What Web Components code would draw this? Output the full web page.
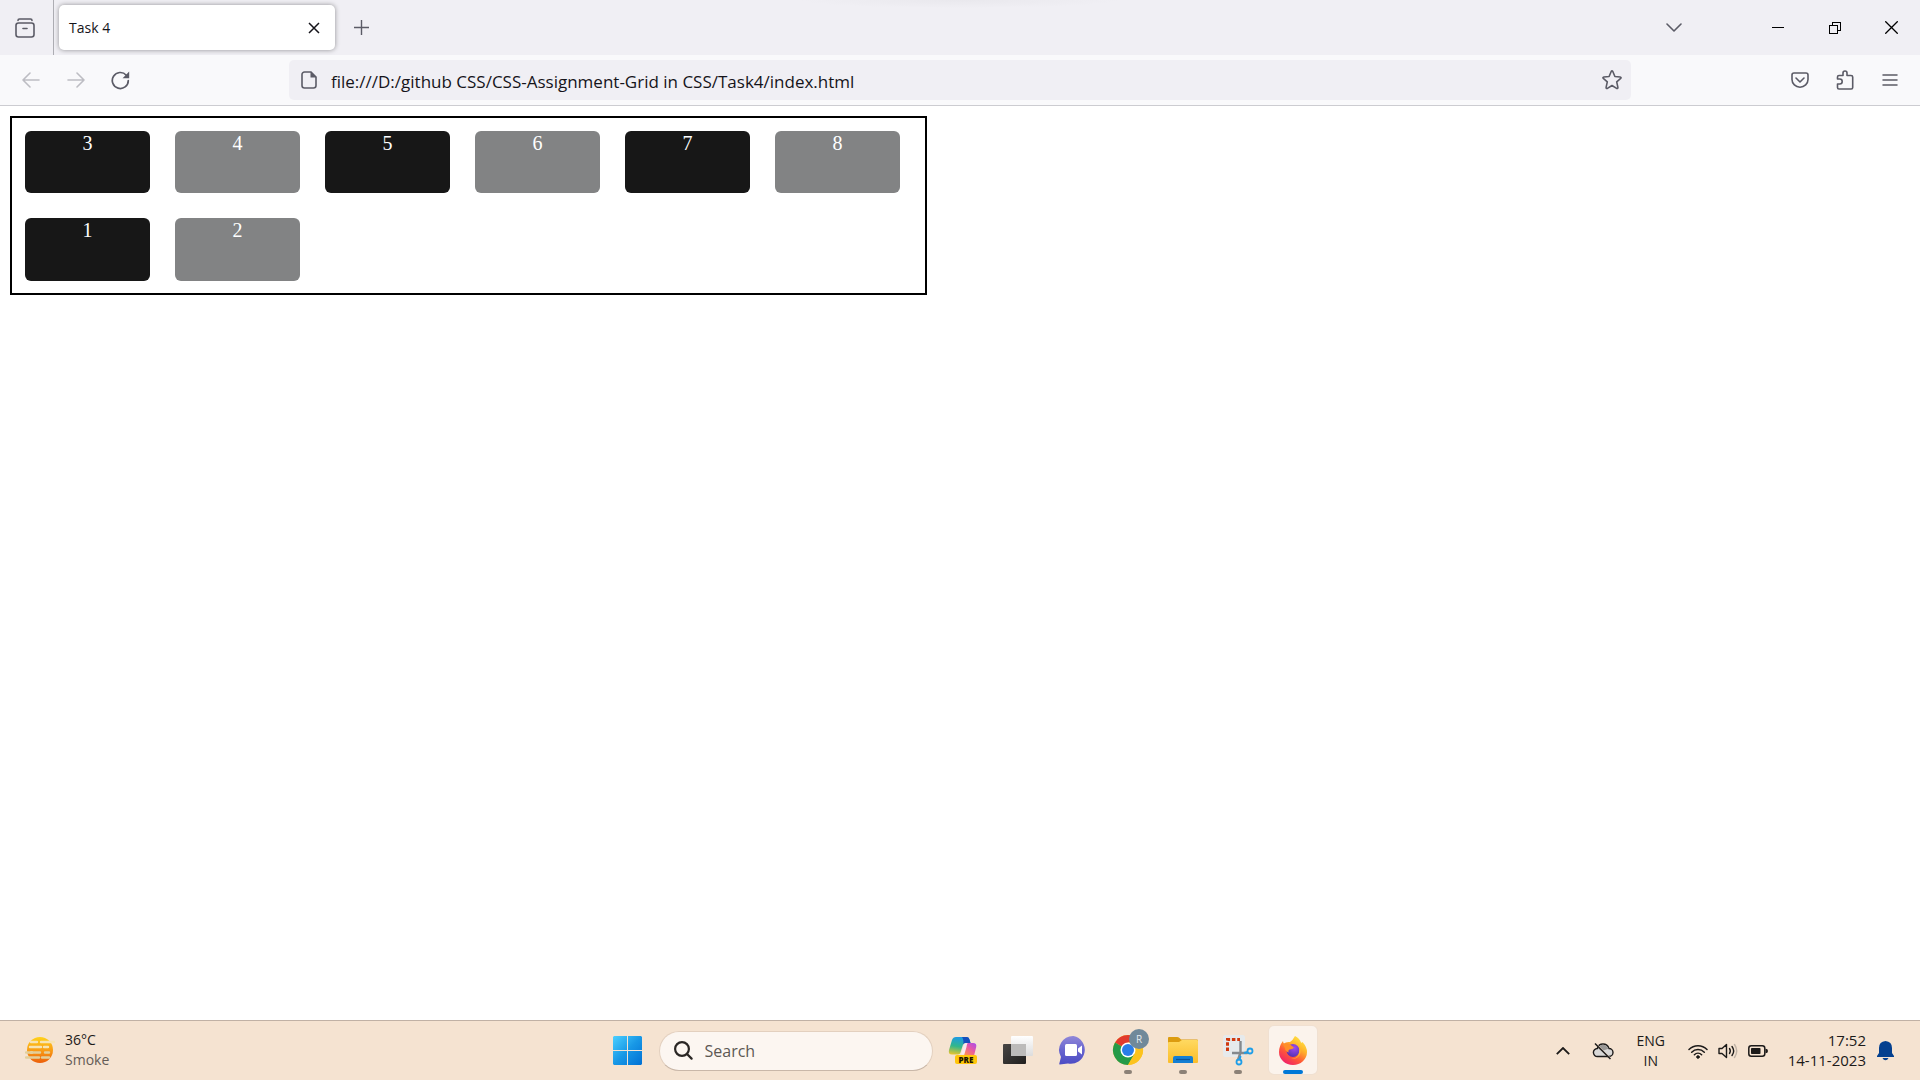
<!DOCTYPE html>
<html lang="en">
<head>
<meta charset="utf-8">
<title>Task 4</title>
<style>
  html, body { height: 100%; }
  body {
    margin: 0;
    display: flex;
    flex-direction: column;
    overflow: hidden;
    background: #fff;
    font-family: "Open Sans", "Noto Sans", sans-serif;
  }
  page-view { flex: 1; }
</style>
</head>
<body>
<tab-strip></tab-strip>
<nav-bar></nav-bar>
<page-view>
  <number-grid>
    <grid-cell tone="dark">3</grid-cell>
    <grid-cell tone="light">4</grid-cell>
    <grid-cell tone="dark">5</grid-cell>
    <grid-cell tone="light">6</grid-cell>
    <grid-cell tone="dark">7</grid-cell>
    <grid-cell tone="light">8</grid-cell>
    <grid-cell tone="dark">1</grid-cell>
    <grid-cell tone="light">2</grid-cell>
  </number-grid>
</page-view>
<task-bar></task-bar>

<script>
function define(name, html) {
  const template = document.createElement('template');
  template.innerHTML = html;
  customElements.define(name, class extends HTMLElement {
    constructor() {
      super();
      this.attachShadow({ mode: 'open' }).append(template.content.cloneNode(true));
    }
    connectedCallback() {
      const button = this.shadowRoot.querySelector('button[data-labelled]');
      if (button && this.hasAttribute('label')) button.setAttribute('aria-label', this.getAttribute('label'));
    }
  });
}

/* Square button that holds one slotted icon */
define('icon-button', `
<style>
  :host { display: block; width: 45px; height: 45px; color: #5b5b66; }
  :host([dim]) { color: #bdbdc3; }
  :host([window]) { width: 57px; color: #000; }
  button { all: unset; display: flex; width: 100%; height: 100%; align-items: center; justify-content: center; }
  ::slotted(svg) { display: block; }
</style>
<button data-labelled><slot></slot></button>`);

define('browser-tab', `
<style>
  :host {
    display: flex; align-items: center; justify-content: space-between; box-sizing: border-box;
    width: 276px; height: 45px; padding: 0 4px 0 10px; border-radius: 5px;
    background: #fff; box-shadow: 0 0 5px rgba(0,0,0,.4); color: #15141a;
    font-size: 14px; line-height: 20px;
  }
  icon-button { width: 34px; height: 34px; color: #15141a; }
</style>
<slot></slot>
<icon-button label="Close tab"><svg width="12" height="12" viewBox="0 0 12 12" fill="none" stroke="currentColor" stroke-width="1.5"><path d="M1 1l10 10M11 1L1 11"/></svg></icon-button>`);

define('tab-strip', `
<style>
  :host {
    display: flex; align-items: center; height: 55px;
    background: radial-gradient(ellipse 160px 8px at 50% 0, #e9e8ed, #f0eff4) #f0eff4;
  }
  .view { display: flex; align-items: center; width: 54px; height: 55px; border-right: 1px solid #adadb3; padding-left: 2px; box-sizing: border-box; }
  browser-tab { margin: 0 4px 0 5px; }
  .fill { flex: 1; }
  .list { margin-right: 53px; }
</style>
<div class="view"><icon-button label="Firefox View"><svg width="20" height="20" viewBox="0 0 20 20" fill="none" stroke="currentColor" stroke-width="1.6" stroke-linecap="round"><path d="M3 2.500Q3 1 4.500 1h11Q17 1 17 2.500"/><rect x="1" y="5" width="18" height="14" rx="2.500"/><path d="M8 10.500h4"/></svg></icon-button></div>
<browser-tab>Task 4</browser-tab>
<icon-button label="New tab"><svg width="15" height="15" viewBox="0 0 15 15" fill="none" stroke="currentColor" stroke-width="1.4"><path d="M7.500 0v15M0 7.500h15"/></svg></icon-button>
<div class="fill"></div>
<icon-button class="list" label="List all tabs"><svg width="16" height="10" viewBox="0 0 16 10" fill="none" stroke="currentColor" stroke-width="1.600" stroke-linecap="round" stroke-linejoin="round"><path d="M1 1l7 7 7-7"/></svg></icon-button>
<icon-button window label="Minimise"><svg width="12" height="12" viewBox="0 0 12 12" shape-rendering="crispEdges"><path d="M0 5h12v1H0z"/></svg></icon-button>
<icon-button window label="Restore"><svg width="12" height="12" viewBox="0 0 12 12" fill="none" stroke="currentColor" shape-rendering="crispEdges"><path d="M.5 3.500h8v8h-8zM3.500 3V.5h8v8H9"/></svg></icon-button>
<icon-button window label="Close"><svg width="13" height="13" viewBox="0 0 13 13" fill="none" stroke="currentColor" stroke-width="1.300"><path d="M.3.3l12.400 12.400M12.700.3L.3 12.700"/></svg></icon-button>`);

define('address-field', `
<style>
  :host { display: flex; align-items: center; box-sizing: border-box; height: 40px; padding-left: 12px; border-radius: 5px; background: #f0eff4; color: #5b5b66; }
  input { all: unset; flex: 1; min-width: 0; height: 24px; padding-top: 3px; margin-left: 14px; color: #15141a; font-size: 17px; line-height: 24px; }
  icon-button { width: 38px; height: 38px; }
</style>
<svg width="16" height="18" viewBox="0 0 16 18"><path d="M3.500 1H10l5 5v8.500a2.500 2.500 0 0 1-2.500 2.500h-9A2.500 2.500 0 0 1 1 14.500v-11A2.500 2.500 0 0 1 3.500 1z" fill="none" stroke="currentColor" stroke-width="1.600"/><path d="M9.500.8v5.700h5.700z" fill="currentColor"/></svg>
<input type="text" aria-label="Address" spellcheck="false" value="file:///D:/github CSS/CSS-Assignment-Grid in CSS/Task4/index.html">
<icon-button label="Bookmark this page"><svg width="20" height="20" viewBox="0 0 20 20" fill="none" stroke="currentColor" stroke-width="1.600" stroke-linejoin="round"><path d="M9.200 1.500q.8-1.200 1.600 0l2.100 5 5.300.5q1.400.3.500 1.400l-4 3.500 1.200 5.500q0 1.500-1.300 1L10 15.500l-4.600 2.900q-1.300.5-1.300-1l1.200-5.500-4-3.500q-.9-1.100.5-1.400l5.300-.5z"/></svg></icon-button>`);

define('nav-bar', `
<style>
  :host { display: flex; align-items: center; box-sizing: border-box; height: 51px; padding: 0 8px; background: #f9f9fb; border-bottom: 1px solid #ccccd1; }
  .gap { flex: 0 1 146px; }
  address-field { flex: 1; }
</style>
<icon-button dim label="Back"><svg width="18" height="16" viewBox="0 0 18 16" fill="none" stroke="currentColor" stroke-width="1.600" stroke-linecap="round" stroke-linejoin="round"><path d="M17 8H1M8 1L1 8l7 7"/></svg></icon-button>
<icon-button dim label="Forward"><svg width="18" height="16" viewBox="0 0 18 16" fill="none" stroke="currentColor" stroke-width="1.600" stroke-linecap="round" stroke-linejoin="round"><path d="M1 8h16M10 1l7 7-7 7"/></svg></icon-button>
<icon-button label="Reload"><svg width="19" height="19" viewBox="0 0 19 19"><path d="M15.300 4.200A8 8 0 1 0 17.300 9.500" fill="none" stroke="currentColor" stroke-width="1.700" stroke-linecap="round"/><path d="M18.200.6v6.600h-6.600z" fill="currentColor"/></svg></icon-button>
<div class="gap"></div>
<address-field></address-field>
<div class="gap"></div>
<icon-button label="Save to Pocket"><svg width="18" height="16" viewBox="0 0 18 16" fill="none" stroke="currentColor" stroke-width="1.600" stroke-linecap="round" stroke-linejoin="round"><path d="M3 1h12q2 0 2 2v4.500a8 7.700 0 0 1-16 0V3q0-2 2-2z"/><path d="M5 6l4 4 4-4"/></svg></icon-button>
<icon-button label="Extensions"><svg width="18" height="20" viewBox="0 0 18 20" fill="none" stroke="currentColor" stroke-width="1.600" stroke-linejoin="round"><path d="M1.500 9V7q0-1.500 1.500-1.500h4V3a2 2 0 0 1 4 0v2.500h4q1.700 0 1.700 1.500v10.500q0 1.500-1.500 1.500H3q-1.500 0-1.500-1.500V14h2.300a2.400 2.500 0 0 0 0-5z"/></svg></icon-button>
<icon-button label="Open application menu"><svg width="16" height="12" viewBox="0 0 16 12" fill="none" stroke="currentColor" stroke-width="1.500" stroke-linecap="round"><path d="M1 1h14M1 6h14M1 11h14"/></svg></icon-button>`);

define('page-view', `
<style>:host { display: block; padding: 10px; background: #fff; }</style>
<slot></slot>`);

define('number-grid', `
<style>
  :host {
    display: inline-grid; grid-template-columns: repeat(6, 125px); grid-template-rows: 62px 63px; gap: 25px;
    padding: 13px 25px 12px 13px; border: 2px solid #000;
    font-family: "Liberation Serif", serif; font-size: 20px; line-height: 25px;
  }
</style>
<slot></slot>`);

define('grid-cell', `
<style>
  :host { display: block; border-radius: 6px; background: #171717; color: #fff; text-align: center; }
  :host([tone="light"]) { background: #828384; }
</style>
<slot></slot>`);

/* Pinned application; "running" and "active" add the marker under the icon */
define('task-app', `
<style>
  :host { display: block; width: 55px; height: 59px; }
  button { all: unset; display: flex; position: relative; box-sizing: border-box; width: 48px; height: 48px; margin: 5px auto 0; align-items: center; justify-content: center; border-radius: 5px; }
  :host([active]) button { background: #fbf3ec; box-shadow: 0 0 0 1px #f0e0d1; }
  :host([running]) button::after, :host([active]) button::after {
    content: ""; position: absolute; left: 20px; bottom: 0; width: 8px; height: 4px; border-radius: 2px; background: #8c8177;
  }
  :host([active]) button::after { left: 14px; width: 20px; background: #0078d7; }
  ::slotted(svg) { display: block; overflow: visible; }
</style>
<button data-labelled><slot></slot></button>`);

define('search-pill', `
<style>
  :host { display: flex; align-items: center; box-sizing: border-box; width: 274px; height: 40px; padding: 0 14px; border: 1px solid #e3d0bf; border-bottom-color: #c9b7a8; border-radius: 20px; background: #fcf6f1; }
  input { all: unset; flex: 1; min-width: 0; margin-left: 12px; height: 24px; font-size: 16px; line-height: 24px; color: #5d5854; }
  input::placeholder { color: #5d5854; opacity: 1; }
</style>
<svg width="19" height="19" viewBox="0 0 19 19" fill="none" stroke="#2a2624" stroke-width="2.200" stroke-linecap="round"><circle cx="8" cy="8" r="6.900"/><path d="M13 13l4.600 4.600"/></svg>
<input type="search" aria-label="Search" placeholder="Search">`);

define('task-bar', `
<style>
  :host {
    display: grid; grid-template-columns: 1fr auto 1fr; align-items: center; box-sizing: border-box; height: 60px;
    border-top: 1px solid #c0b1a5; background: #f5e3d1; color: #1c1a19; font-size: 14px; line-height: 20px;
  }
  button { all: unset; }
  .weather { display: flex; align-items: center; justify-self: start; gap: 10px; padding-left: 25px; padding-bottom: 2px; }
  .weather span { display: block; }
  .weather .sky { color: #645c56; }
  .apps { display: flex; align-items: center; }
  search-pill { margin: 0 3px 0 4px; }
  .tray { display: flex; align-items: center; justify-self: end; padding-right: 26px; }
  .tray svg { display: block; }
  .cloud { margin: 0 22px; }
  .lang { width: 30px; text-align: center; margin-right: 22px; }
  .status { display: flex; align-items: center; gap: 10px; margin-right: 20px; }
  .clock { text-align: right; margin-right: 11px; padding-bottom: 2px; font-size: 15px; }
</style>
<button class="weather">
  <svg width="30" height="28" viewBox="0 0 30 28">
    <defs><linearGradient id="sun" x1="0" y1="0" x2="0" y2="1"><stop offset="0" stop-color="#ffd21c"/><stop offset=".5" stop-color="#f99e16"/><stop offset="1" stop-color="#ec5f0b"/></linearGradient></defs>
    <circle cx="15" cy="14" r="13" fill="url(#sun)"/>
    <g stroke="#f6e4b4" stroke-width="2.400" stroke-linecap="round"><path d="M6 6h6M16 6h13M5 11h11M19 11h4M6 16.500h1" /><path d="M1 16.500h14M20 16.500h4M1 21.500h13M17 21.500h7" stroke="#e2cf9a"/></g>
  </svg>
  <span><span>36°C</span><span class="sky">Smoke</span></span>
</button>

<div class="apps">
  <task-app label="Start"><svg width="29" height="29" viewBox="0 0 29 29">
    <defs><linearGradient id="win" gradientUnits="userSpaceOnUse" x1="0" y1="0" x2="29" y2="29"><stop stop-color="#4cd0ff"/><stop offset=".5" stop-color="#1898e6"/><stop offset="1" stop-color="#0070d4"/></linearGradient></defs>
    <path fill="url(#win)" d="M1 0h13v14H0V1zM15 0h13l1 1v13H15zM0 15h14v14H1l-1-1zM15 15h14v13l-1 1H15z"/></svg></task-app>
  <search-pill></search-pill>
  <task-app label="Copilot"><svg width="30" height="29" viewBox="0 0 30 29">
    <defs>
      <linearGradient id="cpa" x1=".3" y1="0" x2=".1" y2="1"><stop stop-color="#1f9be2"/><stop offset=".5" stop-color="#31b78b"/><stop offset="1" stop-color="#f0c52a"/></linearGradient>
      <linearGradient id="cpb" x1="1" y1="0" x2=".2" y2="1"><stop stop-color="#a64cf0"/><stop offset=".5" stop-color="#e458a8"/><stop offset="1" stop-color="#ff8a55"/></linearGradient>
    </defs>
    <path d="M8 1h11q2 0 2.700 3l.8 3h-5q-2 0-2.600 2l-2.400 7.500Q12 18.500 10 18.500H4q-4 0-3-4.500L4 4q1-3 4-3z" fill="url(#cpa)"/>
    <path d="M14 1h5q2 0 2.700 3l.8 3h-5.300q-1.300 0-1.900 1.600Q16 3.500 14 1z" fill="#164fbc"/>
    <path d="M16.500 7.500h4l-3.500 11h-4z" fill="#f7e9ee"/>
    <path d="M20 7h5q4 0 3.200 4l-2 8h-10l2.300-8Q19 7 20 7z" fill="url(#cpb)"/>
    <rect x="7" y="19" width="22" height="9" rx="2" fill="#ffc60a"/>
    <text x="18" y="26.500" text-anchor="middle" font-family="Open Sans, sans-serif" font-size="8" font-weight="800" fill="#1c1400">PRE</text></svg></task-app>
  <task-app label="Task view"><svg width="30" height="29" viewBox="0 0 30 29">
    <defs><linearGradient id="tva" x1="0" y1="0" x2="1" y2="1"><stop stop-color="#484644"/><stop offset="1" stop-color="#201f1e"/></linearGradient><linearGradient id="tvb" x1="0" y1="0" x2="0" y2="1"><stop stop-color="#fff"/><stop offset="1" stop-color="#dcdcdc"/></linearGradient></defs>
    <rect y="8" width="23" height="20" rx="1" fill="url(#tva)"/><rect x="8" width="22" height="20" rx="1" fill="url(#tvb)"/><path d="M8 8h15v12H8z" fill="#bcbbba"/></svg></task-app>
  <task-app label="Chat"><svg width="29" height="29" viewBox="0 0 29 29">
    <defs><linearGradient id="chat" x1="0" y1="0" x2="0" y2="1"><stop stop-color="#9087d8"/><stop offset=".5" stop-color="#6865cf"/><stop offset="1" stop-color="#4b4bc4"/></linearGradient></defs>
    <path d="M14.500 0A14 14 0 1 1 9 27.500L.8 28.500Q0 28.500.3 27.500L2 21A14 14 0 0 1 14.500 0z" fill="url(#chat)"/><rect x="6" y="8" width="12" height="12" rx="1.500" fill="#fff"/><path d="M19 12.500l4-3v9l-4-3z" fill="#fff"/></svg></task-app>
  <task-app running label="Chrome"><svg width="30" height="30" viewBox="0 0 30 30">
    <circle cx="15" cy="15" r="15" fill="#fcc31e"/><path d="M15 15L2 7.500A15 15 0 0 1 28 7.500H15z" fill="#e23a2e"/><path d="M2 7.500A15 15 0 0 0 15 30l6.500-11.300L15 15z" fill="#259a48"/><path d="M15 7.500h13L21.500 15z" fill="#e23a2e"/><path d="M28 7.500H15V9l6.500 9.700L15 30A15 15 0 0 0 28 7.500z" fill="#fcc31e"/><circle cx="15" cy="15" r="7.500" fill="#fff"/><circle cx="15" cy="15" r="6" fill="#2a7de9"/>
    <circle cx="26" cy="4" r="10" fill="#70899a"/><text x="26" y="7.500" text-anchor="middle" font-family="Open Sans, sans-serif" font-size="10" fill="#e4eaee">R</text></svg></task-app>
  <task-app running label="File Explorer"><svg width="30" height="28" viewBox="0 0 30 28">
    <defs><linearGradient id="fold" x1="0" y1="0" x2="0" y2="1"><stop stop-color="#ffd960"/><stop offset="1" stop-color="#fbbd2a"/></linearGradient></defs>
    <path d="M1 1h8q1.500 0 2.500 1l1.500 1.500h16q1 0 1 1V10H0V2q0-1 1-1z" fill="#dc9c10"/><path d="M1 6h10l3-2h15q1 0 1 1v21q0 1-1 1H1q-1 0-1-1V7q0-1 1-1z" fill="url(#fold)"/><path d="M5 27v-5q0-2 2-2h16q2 0 2 2v5z" fill="#157fd3"/><path d="M8 23.500h14" stroke="#0c5499" stroke-width="1.200"/></svg></task-app>
  <task-app running label="Snipping Tool"><svg width="30" height="30" viewBox="0 0 30 30">
    <rect width="22" height="22" rx="2.500" fill="#e6eaec"/><path d="M4.500 16V4.500H17" fill="none" stroke="#d0390f" stroke-width="3" stroke-dasharray="3.500 1.800"/><path d="M17.500 6v11.500L15 25M9 18h15l1-1" fill="none" stroke="#84898d" stroke-width="2.400"/><circle cx="27" cy="16" r="2.500" fill="none" stroke="#1f9ee8" stroke-width="1.800"/><circle cx="16" cy="27" r="2.500" fill="none" stroke="#1f9ee8" stroke-width="1.800"/><path d="M21 18l4-1M17.500 21l-1 4" stroke="#1f9ee8" stroke-width="2"/></svg></task-app>
  <task-app active label="Firefox"><svg width="28" height="29" viewBox="0 0 28 29">
    <defs><linearGradient id="fx" x1=".85" y1="0" x2=".2" y2="1"><stop stop-color="#fff04a"/><stop offset=".35" stop-color="#ffb42b"/><stop offset=".65" stop-color="#ff5a36"/><stop offset="1" stop-color="#ee1872"/></linearGradient><radialGradient id="fxp" cx=".6" cy=".3" r=".8"><stop stop-color="#a04bf0"/><stop offset="1" stop-color="#4c2fa8"/></radialGradient></defs>
    <path d="M16 0q4.500 2 6 6.500 1 .5 1.500-.5Q28 11 28 16a14 13 0 0 1-28 0Q0 10 4 5q0 1.500 1 2.500 2-2 6-1.500Q14 4 16 0z" fill="url(#fx)"/><circle cx="14" cy="14.500" r="6.500" fill="url(#fxp)"/><path d="M4 8.500q5-3 9 1.500l2 1.500q-1 2-4.500 2Q9 14 9.500 16.500 6 15 6 12z" fill="#ff8e28"/><path d="M20 10q3 4 1 8.500-3 5-9 4.500 8-1 8-6.500.8-3 0-6.500z" fill="#ffb62e"/></svg></task-app>
</div>

<div class="tray">
  <button aria-label="Show hidden icons"><svg width="14" height="8" viewBox="0 0 14 8" fill="none" stroke="#1c1a19" stroke-width="1.800"><path d="M.8 7.200L7 1l6.200 6.200"/></svg></button>
  <button class="cloud" aria-label="OneDrive"><svg width="22" height="18" viewBox="0 0 22 18" fill="none" stroke="#1c1a19"><path d="M5.500 14.500a4 4 0 0 1-.2-8Q6.500 2 11 2t6 4.500a4 4 0 0 1 0 8z" fill="#d9d8d7" stroke-width="1.400"/><path d="M6 6.500Q8 2.500 11 2.700t5.500 4L10 9z" fill="#9a9896" stroke="none"/><path d="M3.200 1.200l16 16" stroke="#f5e3d1" stroke-width="1.600"/><path d="M3 1.500l15.500 15.500" stroke-width="1.500"/></svg></button>
  <button class="lang">ENG<br>IN</button>
  <button class="status" aria-label="Network, volume and battery">
    <svg width="20" height="16" viewBox="0 0 20 16" fill="none" stroke="#1c1a19" stroke-width="1.500" stroke-linecap="round"><path d="M1 6.500a12.500 12.500 0 0 1 18 0M3.700 9.200a8.800 8.800 0 0 1 12.600 0M6.400 11.700a5.200 5.200 0 0 1 7.200 0"/><circle cx="10" cy="14" r="1.300" fill="#1c1a19" stroke-width="1"/></svg>
    <svg width="20" height="16" viewBox="0 0 20 16" fill="none" stroke="#1c1a19" stroke-width="1.400" stroke-linecap="round" stroke-linejoin="round"><path d="M1 5.500h3L8.500 1.500v13L4 10.500H1z"/><path d="M11.500 5.500q1.700 2.500 0 5M14 3.500q3.400 4.500 0 9"/><path d="M16.500 1.500q4.500 6.500 0 13" stroke="#c0b3a7"/></svg>
    <svg width="20" height="12" viewBox="0 0 20 12"><rect x=".8" y=".8" width="16" height="10.400" rx="2.500" fill="none" stroke="#1c1a19" stroke-width="1.500"/><rect x="3" y="3" width="9.500" height="6" rx=".8" fill="#1c1a19"/><path d="M17.500 3.800q2.500 0 2.500 2.200t-2.500 2.200z" fill="#1c1a19"/></svg>
  </button>
  <button class="clock">17:52<br>14-11-2023</button>
  <button aria-label="Notifications"><svg width="17" height="20" viewBox="0 0 17 20" fill="#04408f"><path d="M8.500 0Q15 .5 15 7v5l2 3v1H0v-1l2-3V7Q2 .5 8.500 0zM5.500 17h6q-1 2.300-3 2.300t-3-2.300z"/></svg></button>
</div>`);
</script>
</body>
</html>
